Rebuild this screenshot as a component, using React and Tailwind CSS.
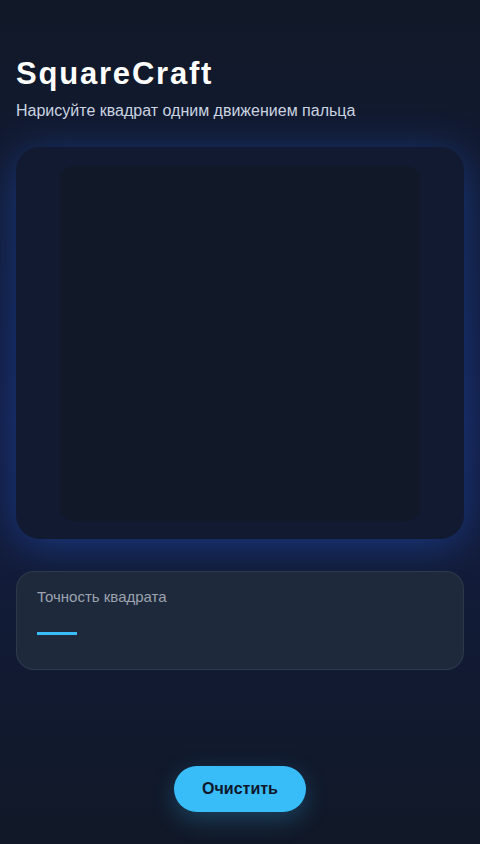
import React from "react";

const App = () => {
  return (
    <div
      className="min-h-[844px] w-full flex flex-col px-4 bg-gradient-to-b from-[#111827] via-[#131d42] to-[#111827]"
      style={{ fontFamily: '"Liberation Sans", Arial, sans-serif' }}
    >
      <h1 className="mt-[56px] text-[31px] leading-[36px] font-bold tracking-[1.8px] text-white">
        SquareCraft
      </h1>
      <p className="mt-[9px] text-[16px] leading-[20px] text-[#cbd5e1]">
        Нарисуйте квадрат одним движением пальца
      </p>

      <div className="mt-[26px] h-[392px] rounded-[24px] bg-[#121a31] shadow-[0_6px_40px_rgba(37,99,235,0.4)] flex items-center justify-center">
        <div className="w-[360px] h-[355px] rounded-[14px] bg-[#111827]" />
      </div>

      <div className="mt-[32px] h-[99px] rounded-[18px] bg-[#1e293b] border border-[#334155]/70 px-5 pt-[15px]">
        <div className="text-[15px] leading-[20px] text-[#9ca3af]">
          Точность квадрата
        </div>
        <div className="mt-[25px] w-[40px] h-[3px] bg-[#38bdf8]" />
      </div>

      <div className="flex justify-center mt-[96px]">
        <button className="w-[132px] h-[46px] rounded-full bg-[#38bdf8] text-[#0f172a] text-[16px] font-bold shadow-[0_8px_24px_rgba(56,189,248,0.25)]">
          Очистить
        </button>
      </div>
    </div>
  );
};

export default App;
